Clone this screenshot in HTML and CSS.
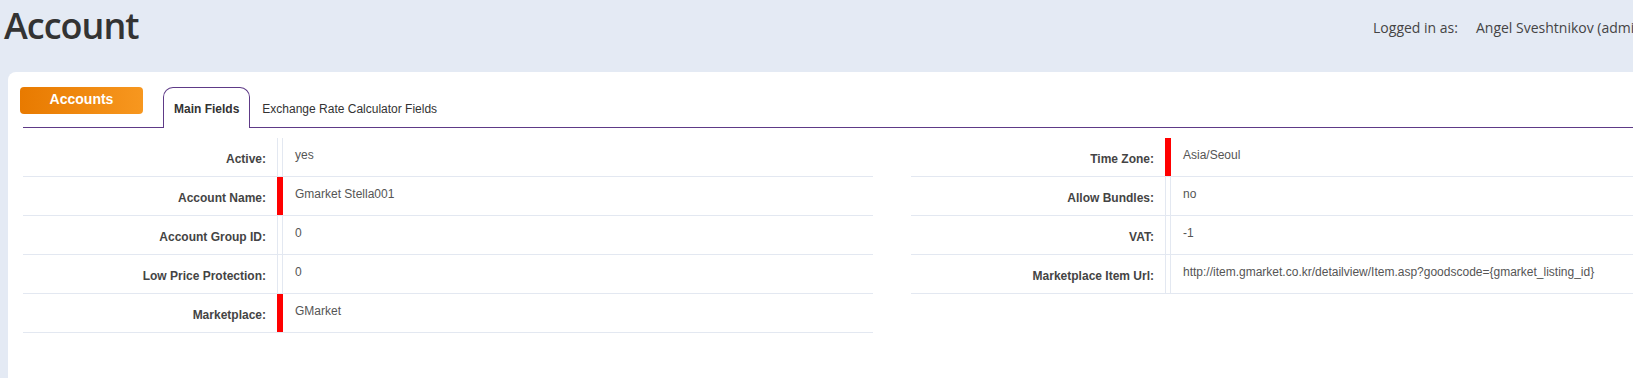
FILE: index.html
```html
<!DOCTYPE html>
<html lang="en">
<head>
<meta charset="utf-8">
<title>Account</title>
<link rel="stylesheet" href="styles.css">
</head>
<body>
<div class="page">
  <header class="top">
    <h1 class="title">Account</h1>
    <div class="user">
      <span class="user-label">Logged in as:</span>
      <span class="user-name">Angel Sveshtnikov (admin)</span>
    </div>
  </header>
  <main class="panel">
    <div class="toolbar">
      <button class="btn-accounts" type="button">Accounts</button>
      <ul class="tabs">
        <li class="tab tab-active">Main Fields</li>
        <li class="tab">Exchange Rate Calculator Fields</li>
      </ul>
    </div>
    <div class="fields">
      <div class="col">
        <div class="row"><div class="label">Active:</div><div class="mark"></div><div class="value">yes</div></div>
        <div class="row"><div class="label">Account Name:</div><div class="mark req"></div><div class="value">Gmarket Stella001</div></div>
        <div class="row"><div class="label">Account Group ID:</div><div class="mark"></div><div class="value">0</div></div>
        <div class="row"><div class="label">Low Price Protection:</div><div class="mark"></div><div class="value">0</div></div>
        <div class="row"><div class="label">Marketplace:</div><div class="mark req"></div><div class="value">GMarket</div></div>
      </div>
      <div class="col">
        <div class="row"><div class="label">Time Zone:</div><div class="mark req"></div><div class="value">Asia/Seoul</div></div>
        <div class="row"><div class="label">Allow Bundles:</div><div class="mark"></div><div class="value">no</div></div>
        <div class="row"><div class="label">VAT:</div><div class="mark"></div><div class="value">-1</div></div>
        <div class="row"><div class="label">Marketplace Item Url:</div><div class="mark"></div><div class="value">http://item.gmarket.co.kr/detailview/Item.asp?goodscode={gmarket_listing_id}</div></div>
      </div>
    </div>
  </main>
</div>
</body>
</html>
```
FILE: styles.css
```css
html, body {
  margin: 0;
  padding: 0;
  overflow: hidden;
  background: #e4eaf4;
}
.page {
  width: 1790px;
  height: 378px;
  overflow: hidden;
  font-family: "Liberation Sans", Arial, sans-serif;
}
.top {
  display: flex;
  align-items: flex-start;
  height: 72px;
  padding-left: 4px;
}
.title {
  margin: 0;
  font-family: "Open Sans", sans-serif;
  font-weight: 600;
  font-size: 36px;
  line-height: 52px;
  color: #333;
  letter-spacing: -1px;
}
.user {
  margin-left: auto;
  display: flex;
  gap: 18px;
  padding-top: 18px;
  padding-right: 143px;
  font-family: "Open Sans", sans-serif;
  font-size: 14px;
  color: #444;
}
.panel {
  margin-left: 8px;
  background: #fff;
  border-radius: 8px 0 0 0;
  padding: 15px 15px 40px 15px;
  min-height: 300px;
}
.toolbar {
  display: flex;
  align-items: flex-start;
  border-bottom: 1px solid #5e3a87;
}
.btn-accounts {
  margin-left: -3px;
  width: 123px;
  height: 27px;
  border: 0;
  border-radius: 4px;
  background: linear-gradient(to right, #e87a00, #f7971f);
  color: #fff;
  font-family: "Liberation Sans", Arial, sans-serif;
  font-weight: bold;
  font-size: 14px;
  padding: 0 0 4px 0;
}
.tabs {
  display: flex;
  list-style: none;
  margin: 0 0 -1px 20px;
  padding: 0;
}
.tab {
  padding: 2px 11px 0 11px;
  display: flex;
  align-items: center;
  font-size: 12px;
  color: #333;
  border: 1px solid transparent;
  border-bottom: 0;
  box-sizing: border-box;
  height: 41px;
}
.tab-active {
  font-weight: bold;
  padding: 2px 10px 0 10px;
  border-color: #5e3a87;
  border-radius: 10px 10px 0 0;
  background: #fff;
}
.fields {
  display: flex;
  gap: 38px;
  padding-top: 10px;
}
.col {
  width: 850px;
}
.row {
  display: flex;
  height: 39px;
  box-sizing: border-box;
  border-bottom: 1px solid #e3e8f1;
}
.label {
  width: 254px;
  box-sizing: border-box;
  padding: 14px 11px 0 0;
  text-align: right;
  font-weight: bold;
  font-size: 12px;
  line-height: 14px;
  color: #444;
}
.mark {
  width: 6px;
  box-sizing: border-box;
  border-left: 1px solid #e3e8f1;
  border-right: 1px solid #e3e8f1;
}
.mark.req {
  background: #ff0000;
  border-color: #ff0000;
}
.value {
  padding: 10px 0 0 12px;
  font-size: 12px;
  line-height: 14px;
  color: #555;
}
```
